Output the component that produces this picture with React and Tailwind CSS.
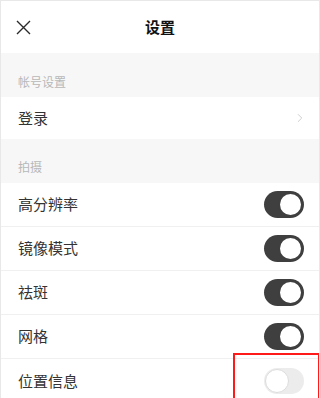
import { ChevronRight } from 'lucide-react';

const font = { fontFamily: '"Noto Sans CJK SC", "Noto Sans", sans-serif' };

function Toggle({ on = true, faded = false }) {
  if (faded) {
    return (
      <div className="relative h-[26px] w-[40px] rounded-full bg-[#ececec]">
        <div className="absolute left-[1px] top-[1px] h-[24px] w-[24px] rounded-full border border-[#dcdcdc] bg-white" />
      </div>
    );
  }
  return (
    <div className={`relative h-[27px] w-[40px] rounded-full ${on ? 'bg-[#3f3f3f]' : 'bg-[#e5e5e5]'}`}>
      <div className="absolute right-[1px] top-[1px] h-[25px] w-[25px] rounded-full border-2 border-[#3f3f3f] bg-white" />
    </div>
  );
}

function SectionLabel({ children, className = '' }) {
  return (
    <div className={`flex items-end bg-[#f7f7f7] px-[17px] text-[12px] text-[#b8b8b8] ${className}`}>
      {children}
    </div>
  );
}

function ToggleRow({ label, faded, last }) {
  return (
    <div className={`flex h-[44px] items-center justify-between pl-[17px] pr-[15px] ${last ? '' : 'border-b border-[#f0f0f0]'}`}>
      <span className="text-[15px] text-[#333]">{label}</span>
      <Toggle faded={faded} />
    </div>
  );
}

export default function App() {
  return (
    <div className="relative h-[398px] w-[320px] overflow-hidden border-x border-t border-[#e8e8e8] bg-white" style={font}>
      <header className="relative flex h-[52px] items-center justify-center">
        <svg className="absolute left-[15px] top-[19px]" width="15" height="15" viewBox="0 0 15 15">
          <path d="M1 1 L14 14 M14 1 L1 14" stroke="#2a2a2a" strokeWidth="1.4" />
        </svg>
        <h1 className="text-[15px] font-semibold text-[#111]">设置</h1>
      </header>

      <SectionLabel className="h-[44px] pb-[6px]">帐号设置</SectionLabel>

      <div className="flex h-[42px] items-center justify-between pl-[17px] pr-[12px]">
        <span className="text-[15px] text-[#333]">登录</span>
        <ChevronRight className="h-[14px] w-[14px] text-[#c8c8c8]" strokeWidth={1.5} />
      </div>

      <SectionLabel className="h-[44px] pb-[7px]">拍摄</SectionLabel>

      <ToggleRow label="高分辨率" />
      <ToggleRow label="镜像模式" />
      <ToggleRow label="祛斑" />
      <ToggleRow label="网格" />
      <ToggleRow label="位置信息" faded last />

      <div className="pointer-events-none absolute left-[232px] top-[352px] h-[60px] w-[87px] border-2 border-[#ff1a1a]" />
    </div>
  );
}
